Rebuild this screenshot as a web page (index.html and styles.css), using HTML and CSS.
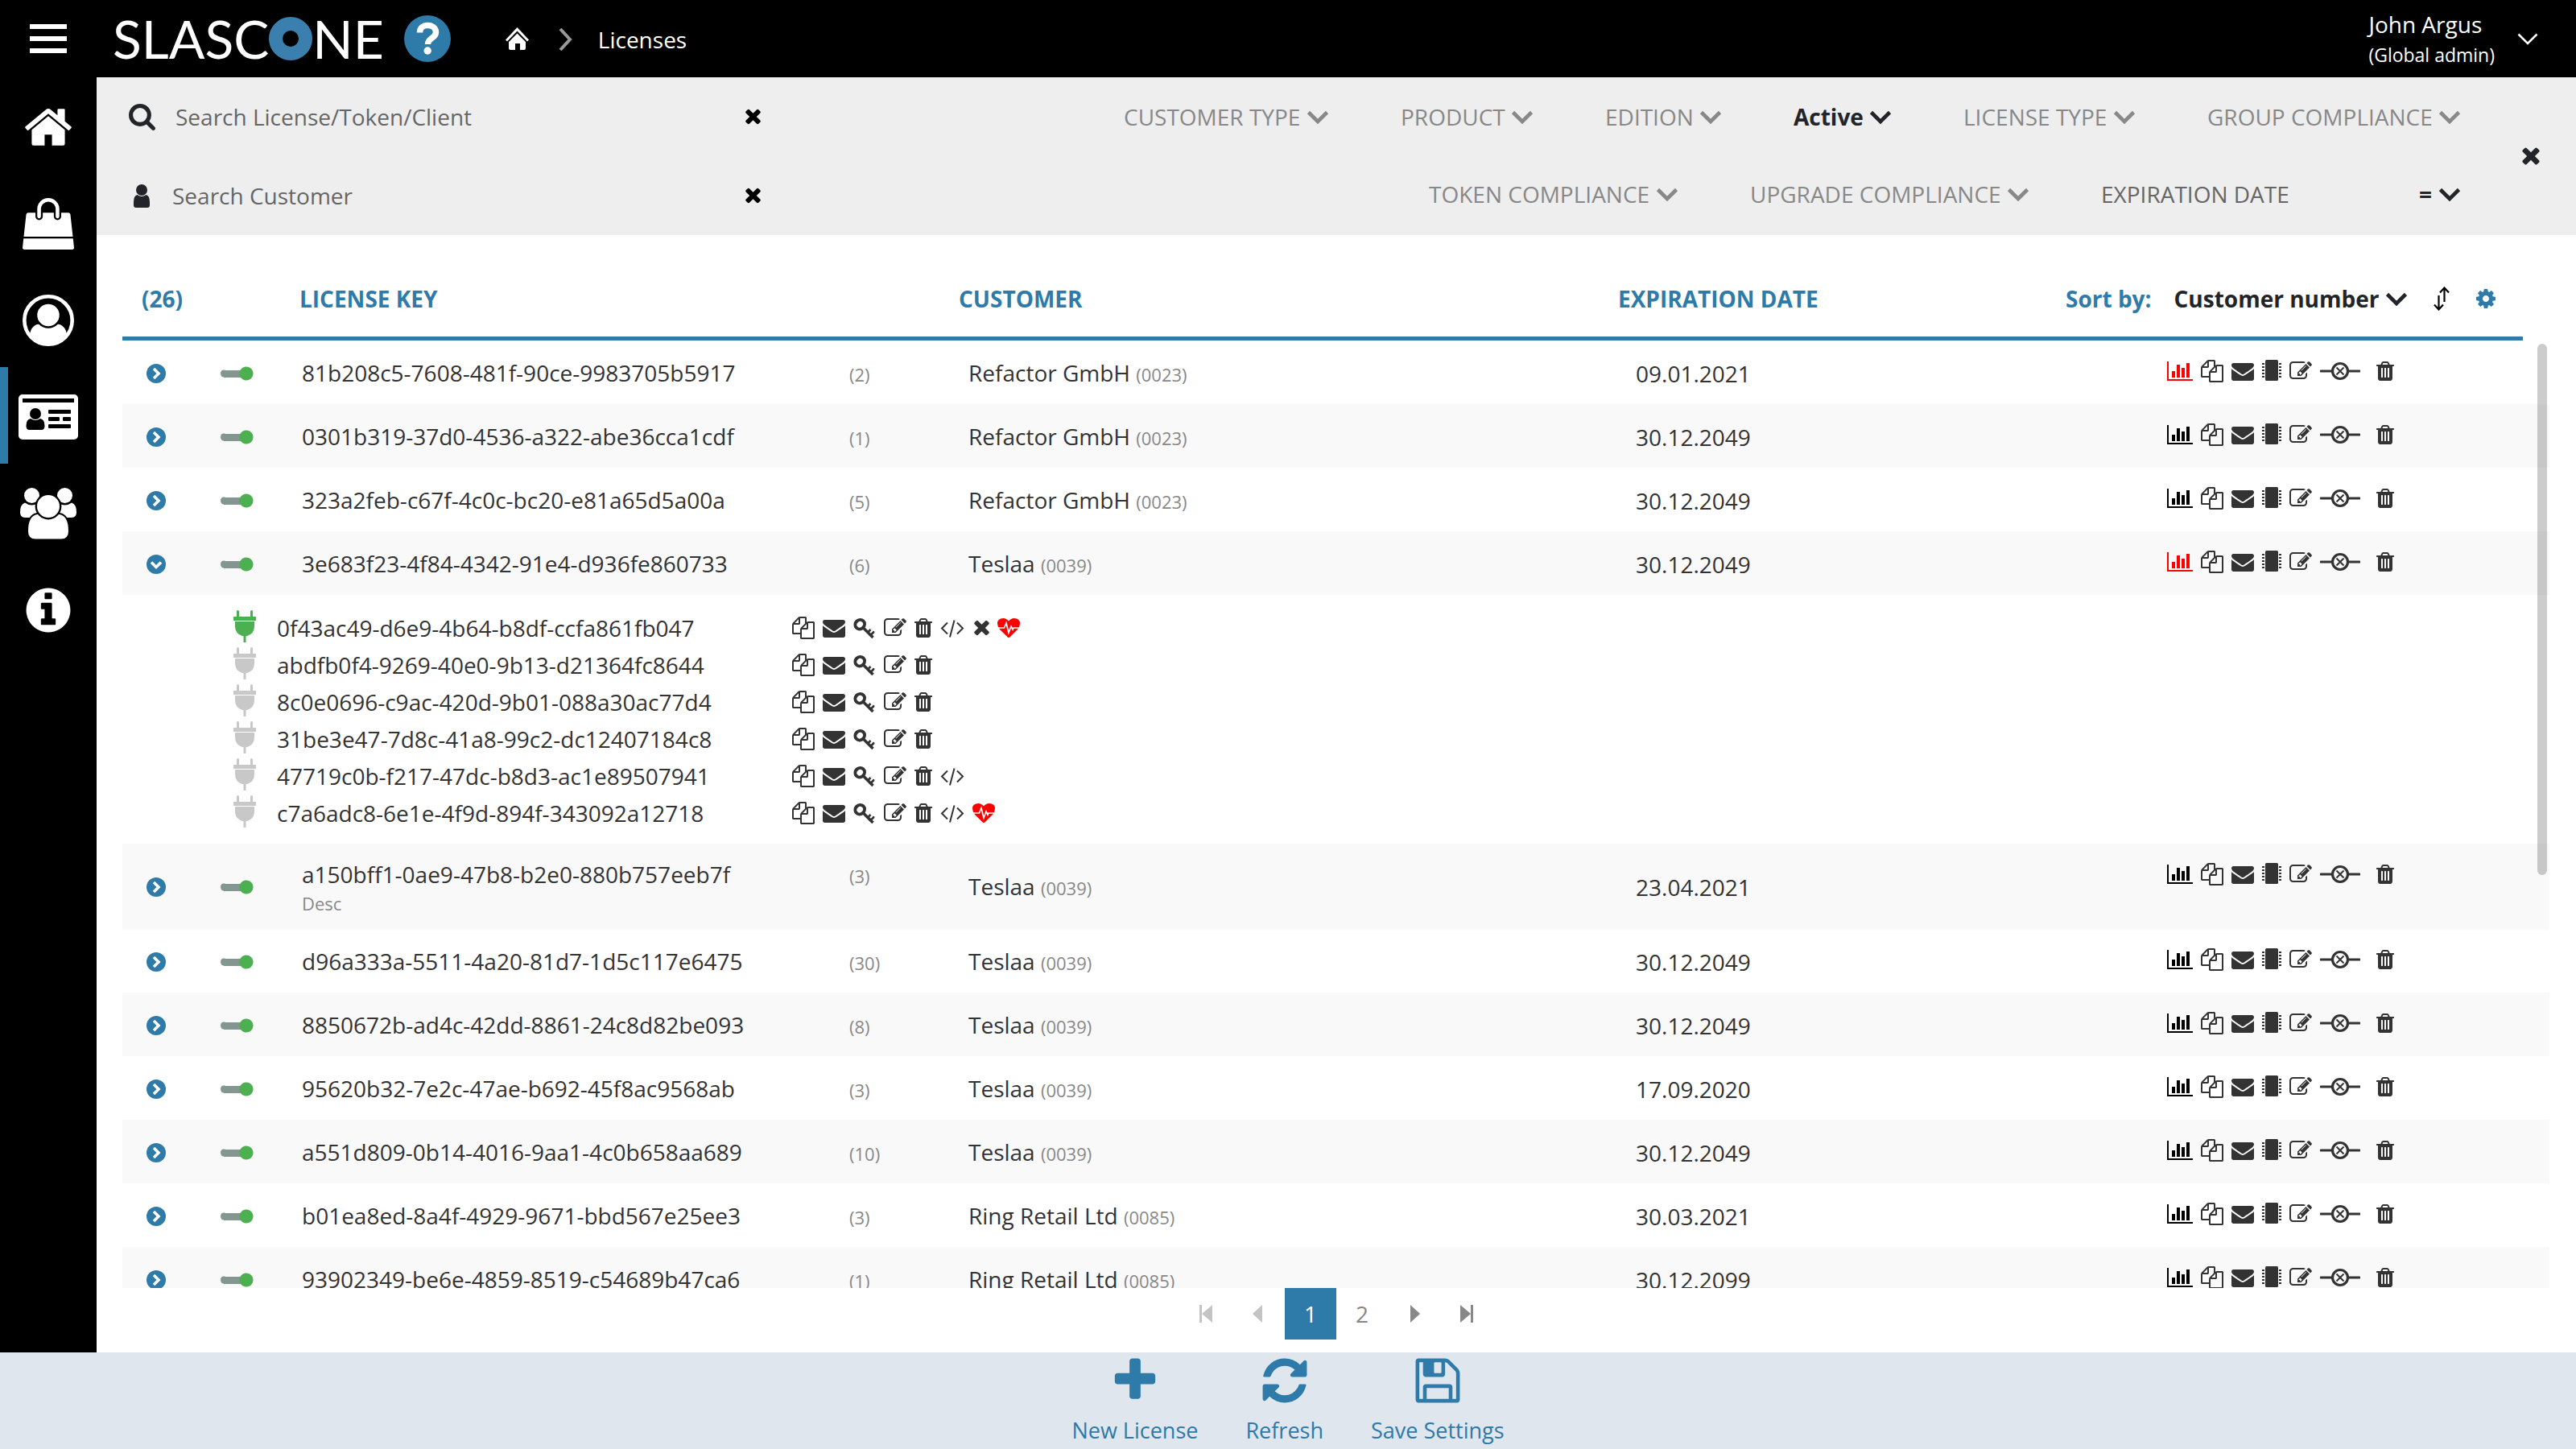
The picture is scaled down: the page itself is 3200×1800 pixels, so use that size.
FILE: index.html
```html
<!DOCTYPE html>
<html lang="en">
<head>
<meta charset="utf-8">
<title>Slascone - Licenses</title>
<link rel="stylesheet" href="styles.css">
</head>
<body>
<svg class="sprite" aria-hidden="true">
  <symbol id="home" viewBox="0 0 1792 1792"><path d="M1472 992v480q0 26-19 45t-45 19h-384v-384h-256v384h-384q-26 0-45-19t-19-45v-480q0-1 .5-3t.5-3l575-474 575 474q1 2 1 6zm223-69l-62 74q-8 9-21 11h-3q-13 0-21-7l-692-577-692 577q-12 8-24 7-13-2-21-11l-62-74q-8-10-7-23.5t11-21.5l719-599q32-26 76-26t76 26l244 204v-195q0-14 9-23t23-9h192q14 0 23 9t9 23v408l219 182q10 8 11 21.5t-7 23.5z"/></symbol>
  <symbol id="bag" viewBox="0 0 1792 1792"><path d="M1757 1408l35 313q3 28-16 50-19 21-48 21h-1664q-29 0-48-21-19-22-16-50l35-313h1722zm-93-839l86 775h-1708l86-775q3-24 21-40.5t43-16.5h256v128q0 53 37.5 90.5t90.5 37.5 90.5-37.5 37.5-90.5v-128h384v128q0 53 37.5 90.5t90.5 37.5 90.5-37.5 37.5-90.5v-128h256q25 0 43 16.5t21 40.5zm-384-185v256q0 26-19 45t-45 19-45-19-19-45v-256q0-106-75-181t-181-75-181 75-75 181v256q0 26-19 45t-45 19-45-19-19-45v-256q0-159 112.5-271.5t271.5-112.5 271.5 112.5 112.5 271.5z"/></symbol>
  <symbol id="person" viewBox="0 0 64 64"><path d="M9 50c1-9 6-13.500 13-13.500h20c7 0 12 4.500 13 13.500q-9 12-23 12T9 50z"/><circle cx="32" cy="25.500" r="15" stroke="#000" stroke-width="2.500"/><circle cx="32" cy="32" r="29.700" fill="none" stroke="currentColor" stroke-width="4.600"/></symbol>
  <symbol id="card" viewBox="0 0 74 64"><rect y="4" width="74" height="56" rx="5"/><g fill="#000"><rect x="5" y="9" width="64" height="5"/><circle cx="21" cy="28" r="7"/><path d="M15 34q6 4 12 0 5.500 1 5.500 9 0 5-4 5h-15q-4 0-4-5 0-8 5.500-9z"/><rect x="37" y="23" width="28" height="5" rx="1"/><rect x="37" y="32" width="14" height="5" rx="1"/><rect x="55" y="32" width="10" height="5" rx="1"/><rect x="37" y="41" width="28" height="5" rx="1"/></g></symbol>
  <symbol id="group" viewBox="0 0 70 64"><path d="M6 18.500q8 6 17 0h24q9 6 17 0 6 2 6 12 0 6.500-6 6.500H6q-6 0-6-6.500 0-10 6-12z"/><circle cx="14.500" cy="9.500" r="9.500"/><circle cx="55.500" cy="9.500" r="9.500"/><path d="M21 32h28q12 2 12 22 0 10.500-10 10.500H19q-10 0-10-10.500 0-20 12-22z" stroke="#000" stroke-width="2"/><circle cx="35" cy="23" r="15.200" stroke="#000" stroke-width="2.400"/></symbol>
  <symbol id="info" viewBox="0 0 1792 1792"><path d="M1152 1376v-160q0-14-9-23t-23-9h-96v-512q0-14-9-23t-23-9h-320q-14 0-23 9t-9 23v160q0 14 9 23t23 9h96v320h-96q-14 0-23 9t-9 23v160q0 14 9 23t23 9h448q14 0 23-9t9-23zm-128-896v-160q0-14-9-23t-23-9h-192q-14 0-23 9t-9 23v160q0 14 9 23t23 9h192q14 0 23-9t9-23zm640 416q0 209-103 385.500t-279.500 279.500-385.500 103-385.500-103-279.500-279.500-103-385.500 103-385.500 279.500-279.500 385.500-103 385.500 103 279.500 279.500 103 385.500z"/></symbol>
  <symbol id="menu" viewBox="0 0 46 36"><path d="M0 0h46v6H0zM0 15h46v6H0zM0 30h46v6H0z"/></symbol>
  <symbol id="help" viewBox="0 0 58 58"><circle cx="29" cy="29" r="29" fill="#2e7aa8"/><path d="M19.500 21.500c0-7 5-9 9.500-9s10.500 2 10.500 8.500c0 8-10 6.500-10 15" fill="none" stroke="#fff" stroke-width="7.500"/><circle cx="29.200" cy="44" r="4.700" fill="#fff"/></symbol>
  <symbol id="ring" viewBox="0 0 54 54"><circle cx="27" cy="27" r="18.500" fill="none" stroke="#3a7fae" stroke-width="17"/></symbol>
  <symbol id="homesmall" viewBox="0 0 29 28"><path d="M14.500 0l14.500 15.500-2 2L14.500 4.500 2 17.500l-2-2z"/><path d="M14.500 7.500L25 18v8q0 2-2 2h-5v-8h-6v8H6q-2 0-2-2v-8z"/></symbol>
  <symbol id="next-crumb" viewBox="0 0 17 28"><path d="M2 1l12 13L2 27" fill="none" stroke="currentColor" stroke-width="4"/></symbol>
  <symbol id="chev-thin" viewBox="0 0 26 15"><path d="M1.500 1.500L13 13 24.500 1.500" fill="none" stroke="currentColor" stroke-width="2.600"/></symbol>
  <symbol id="chev" viewBox="0 0 28 18"><path d="M2.500 3.500L14 15 25.500 3.500" fill="none" stroke="currentColor" stroke-width="4.600"/></symbol>
  <symbol id="search" viewBox="64 128 1664 1664"><path d="M1216 832q0-185-131.500-316.500t-316.500-131.500-316.500 131.500-131.500 316.500 131.500 316.500 316.500 131.500 316.500-131.500 131.500-316.500zm512 832q0 52-38 90t-90 38q-54 0-90-38l-343-342q-179 124-399 124-143 0-273.500-55.500t-225-150-150-225-55.500-273.500 55.500-273.500 150-225 225-150 273.500-55.500 273.500 55.500 225 150 150 225 55.500 273.500q0 220-124 399l343 343q37 37 37 90z"/></symbol>
  <symbol id="user" viewBox="0 0 29 33"><circle cx="16" cy="9" r="7"/><path d="M10.500 15q5.500 4 11 0 4.500 1 4.500 9v4q0 3-3 3H9q-3 0-3-3v-4q0-8 4.500-9z"/></symbol>
  <symbol id="times" viewBox="302 64 1188 1792"><path d="M1490 1322q0 40-28 68l-136 136q-28 28-68 28t-68-28l-294-294-294 294q-28 28-68 28t-68-28l-136-136q-28-28-28-68t28-68l294-294-294-294q-28-28-28-68t28-68l136-136q28-28 68-28t68 28l294 294 294-294q28-28 68-28t68 28l136 136q28 28 28 68t-28 68l-294 294 294 294q28 28 28 68z"/></symbol>
  <symbol id="sort" viewBox="0 0 20 30"><path d="M6.500 11v17M1 22.500l5.500 6 5.500-6M13.500 19V2M8 7.500l5.500-6 5.500 6" fill="none" stroke="currentColor" stroke-width="2.200"/></symbol>
  <symbol id="cog" viewBox="128 128 1536 1536"><path d="M1152 896q0-106-75-181t-181-75-181 75-75 181 75 181 181 75 181-75 75-181zm512-109v222q0 12-8 23t-20 13l-185 28q-19 54-39 91 35 50 107 138 10 12 10 25t-9 23q-27 37-99 108t-94 71q-12 0-26-9l-138-108q-44 23-91 38-16 136-29 186-7 28-36 28h-222q-14 0-24.500-8.500t-11.500-21.500l-28-184q-49-16-90-37l-141 107q-10 9-25 9-14 0-25-11-126-114-165-168-7-10-7-23 0-12 8-23 15-21 51-66.500t54-70.500q-27-50-41-99l-183-27q-13-2-21-12.500t-8-23.500v-222q0-12 8-23t19-13l186-28q14-46 39-92-40-57-107-138-10-12-10-24 0-10 9-23 26-36 98.500-107.500t94.500-71.500q13 0 26 10l138 107q44-23 91-38 16-136 29-186 7-28 36-28h222q14 0 24.500 8.500t11.500 21.500l28 184q49 16 90 37l142-107q9-9 24-9 13 0 25 10 129 119 165 170 7 8 7 22 0 12-8 23-15 21-51 66.500t-54 70.500q26 50 41 98l183 28q13 2 21 12.500t8 23.500z"/></symbol>
  <symbol id="open" viewBox="0 0 24 24"><circle cx="12" cy="12" r="12"/><path d="M9 6l6 6-6 6" fill="none" stroke="#fff" stroke-width="3.600"/></symbol>
  <symbol id="opened" viewBox="0 0 24 24"><circle cx="12" cy="12" r="12"/><path d="M6 9.500l6 6 6-6" fill="none" stroke="#fff" stroke-width="3.600"/></symbol>
  <symbol id="chart" viewBox="0 0 32 28"><path d="M0 2h2v22h30v2H0zM6 14h4v8H6zM12 6h4v16h-4zM18 10h4v12h-4zM24 4h4v18h-4z"/></symbol>
  <symbol id="copy" viewBox="0 0 1792 1792"><path d="M1696 384q40 0 68 28t28 68v1216q0 40-28 68t-68 28h-960q-40 0-68-28t-28-68v-288h-544q-40 0-68-28t-28-68v-672q0-40 20-88t48-76l408-408q28-28 76-48t88-20h416q40 0 68 28t28 68v328q68-40 128-40h416zm-544 213l-299 299h299v-299zm-640-384l-299 299h299v-299zm196 647l316-316v-416h-384v416q0 40-28 68t-68 28h-416v640h512v-256q0-40 20-88t48-76zm956 804v-1152h-384v416q0 40-28 68t-68 28h-416v640h896z"/></symbol>
  <symbol id="mail" viewBox="0 0 1792 1792"><path d="M1792 710v794q0 66-47 113t-113 47h-1472q-66 0-113-47t-47-113v-794q44 49 101 87 362 246 497 345 57 42 92.500 65.500t94.500 48 110 24.500h2q51 0 110-24.500t94.500-48 92.500-65.500q170-123 498-345 57-39 100-87zm0-294q0 79-49 151t-122 123q-376 261-468 325-10 7-42.500 31t-54 38.500-52 32.500-57.500 27-50 9h-2q-23 0-50-9t-57.500-27-52-32.500-54-38.500-42.500-31q-91-64-262-182.500t-205-142.500q-62-42-117-115.500t-55-136.500q0-78 41.500-130t118.500-52h1472q65 0 112.500 47t47.500 113z"/></symbol>
  <symbol id="chip" viewBox="0 0 24 28"><rect x="4" width="16" height="26" rx="1.500"/><path d="M1.500 4v20M22.500 4v20" fill="none" stroke="currentColor" stroke-width="3" stroke-dasharray="2 2"/></symbol>
  <symbol id="edit" viewBox="0 0 1792 1792"><path d="M888 1184l116-116-152-152-116 116v56h96v96h56zm440-720q-16-16-33 1l-350 350q-17 17-1 33t33-1l350-350q17-17 1-33zm80 594v190q0 119-84.500 203.500t-203.500 84.500h-832q-119 0-203.500-84.500t-84.500-203.500v-832q0-119 84.500-203.500t203.500-84.500h832q63 0 117 25 15 7 18 23 3 17-9 29l-49 49q-14 14-32 8-23-6-45-6h-832q-66 0-113 47t-47 113v832q0 66 47 113t113 47h832q66 0 113-47t47-113v-126q0-13 9-22l64-64q15-15 35-7t20 29zm-96-738l288 288-672 672h-288v-288zm444 132l-92 92-288-288 92-92q28-28 68-28t68 28l152 152q28 28 28 68t-28 68z"/></symbol>
  <symbol id="link" viewBox="0 0 50 28"><g fill="none" stroke="currentColor"><path d="M1 14h14M35 14h14" stroke-width="3" stroke-linecap="round"/><circle cx="25" cy="14" r="9.500" stroke-width="3.200"/><path d="M20.500 9.500l9 9M29.500 9.500l-9 9" stroke-width="2"/></g></symbol>
  <symbol id="trash" viewBox="192 0 1408 1792"><path d="M704 1376v-704q0-14-9-23t-23-9h-64q-14 0-23 9t-9 23v704q0 14 9 23t23 9h64q14 0 23-9t9-23zm256 0v-704q0-14-9-23t-23-9h-64q-14 0-23 9t-9 23v704q0 14 9 23t23 9h64q14 0 23-9t9-23zm256 0v-704q0-14-9-23t-23-9h-64q-14 0-23 9t-9 23v704q0 14 9 23t23 9h64q14 0 23-9t9-23zm-544-992h448l-48-117q-7-9-17-11h-317q-10 2-17 11zm928 32v64q0 14-9 23t-23 9h-96v948q0 83-47 143.500t-113 60.500h-832q-66 0-113-58.500t-47-141.500v-952h-96q-14 0-23-9t-9-23v-64q0-14 9-23t23-9h309l70-167q15-37 54-63t79-26h320q40 0 79 26t54 63l70 167h309q14 0 23 9t9 23z"/></symbol>
  <symbol id="key" viewBox="0 0 28 28"><g fill="none" stroke="currentColor"><ellipse cx="8.200" cy="9.700" rx="6" ry="5.600" stroke-width="4" transform="rotate(-45 8.200 9.700)"/><path d="M12 13.500L24.500 26" stroke-width="3.600"/><path d="M18 19.500l3.500-3.500M21.500 23l4-4M19.500 18l1 1M24 18.500l2 1.500" stroke-width="2.600"/></g></symbol>
  <symbol id="code" viewBox="0 0 30 28"><path d="M9 7.500L2 14.500l7 7M21 7.500l7 7-7 7M17.500 4.500l-5.500 21" fill="none" stroke="currentColor" stroke-width="2"/></symbol>
  <symbol id="heart" viewBox="0 0 28 28"><path d="M14 26q-.5 0-1-.3L3 16Q0 12.500 0 8.500 0 2 7.500 2 11 2 14 5.500 17 2 20.500 2 28 2 28 8.500 28 12.500 25 16l-10 9.700q-.5.3-1 .3z"/><path d="M0 14h8.500l2.500-6 3 12 3-8 2 4 1-2h8" fill="none" stroke="#fff" stroke-width="1.700"/></symbol>
  <symbol id="plug" viewBox="0 0 28 40"><rect x="4" width="3" height="9" rx="1.500"/><rect x="21" width="3" height="9" rx="1.500"/><rect y="8" width="28" height="5"/><path d="M2 14h24v6q0 9-9 12h-6q-9-3-9-12zM12.500 31h3v9h-3z"/></symbol>
  <symbol id="first" viewBox="0 0 16 22"><path d="M0 0h3v22H0zM16 0v22L3 11z"/></symbol>
  <symbol id="prev" viewBox="0 0 16 22"><path d="M14 0v22L2 11z"/></symbol>
  <symbol id="next" viewBox="0 0 16 22"><path d="M2 0v22l12-11z"/></symbol>
  <symbol id="last" viewBox="0 0 16 22"><path d="M13 0h3v22h-3zM0 0v22l13-11z"/></symbol>
  <symbol id="plus" viewBox="0 0 1792 1792"><path d="M1600 736v192q0 40-28 68t-68 28h-416v416q0 40-28 68t-68 28h-192q-40 0-68-28t-28-68v-416h-416q-40 0-68-28t-28-68v-192q0-40 28-68t68-28h416v-416q0-40 28-68t68-28h192q40 0 68 28t28 68v416h416q40 0 68 28t28 68z"/></symbol>
  <symbol id="refresh" viewBox="0 0 1792 1792"><path d="M1639 1056q0 5-1 7-64 268-268 434.500t-478 166.500q-146 0-282.500-55t-243.500-157l-129 129q-19 19-45 19t-45-19-19-45v-448q0-26 19-45t45-19h448q26 0 45 19t19 45-19 45l-137 137q71 66 161 102t187 36q134 0 250-65t186-179q11-17 53-117 8-23 30-23h192q13 0 22.500 9.500t9.500 22.500zm25-800v448q0 26-19 45t-45 19h-448q-26 0-45-19t-19-45 19-45l138-138q-148-137-349-137-134 0-250 65t-186 179q-11 17-53 117-8 23-30 23h-199q-13 0-22.500-9.500t-9.500-22.500v-7q65-268 270-434.500t480-166.500q146 0 284 55.500t245 156.500l130-129q19-19 45-19t45 19 19 45z"/></symbol>
  <symbol id="save" viewBox="0 0 1792 1792"><path d="M512 1536h768v-384h-768v384zm896 0h128v-896q0-14-10-38.500t-20-34.500l-281-281q-10-10-34-20t-39-10v416q0 40-28 68t-68 28h-576q-40 0-68-28t-28-68v-416h-128v1280h128v-416q0-40 28-68t68-28h832q40 0 68 28t28 68v416zm-384-928v-320q0-13-9.500-22.500t-22.500-9.500h-192q-13 0-22.500 9.500t-9.500 22.500v320q0 13 9.500 22.500t22.500 9.500h192q13 0 22.500-9.500t9.500-22.500zm640 32v928q0 40-28 68t-68 28h-1344q-40 0-68-28t-28-68v-1344q0-40 28-68t68-28h928q40 0 88 20t76 48l280 280q28 28 48 76t20 88z"/></symbol>
</svg>

<div class="app">
  <header class="topbar">
    <button class="menu" aria-label="Menu"><svg><use href="#menu"/></svg></button>
    <a class="logo" href="#" aria-label="Slascone">SLASC<svg><use href="#ring"/></svg>NE</a>
    <a class="help" href="#" aria-label="Help"><svg><use href="#help"/></svg></a>
    <nav class="crumbs">
      <a href="#" aria-label="Home"><svg class="crumb-home"><use href="#homesmall"/></svg></a>
      <svg class="crumb-sep"><use href="#next-crumb"/></svg>
      <span>Licenses</span>
    </nav>
    <button class="account">
      <span class="account-text"><span>John Argus</span><span class="role">(Global admin)</span></span>
      <svg><use href="#chev-thin"/></svg>
    </button>
  </header>

  <nav class="sidebar">
    <a href="#" aria-label="Home"><svg><use href="#home"/></svg></a>
    <a href="#" aria-label="Products"><svg><use href="#bag"/></svg></a>
    <a href="#" aria-label="Customers"><svg><use href="#person"/></svg></a>
    <a class="current" href="#" aria-label="Licenses"><svg class="w74"><use href="#card"/></svg></a>
    <a href="#" aria-label="Users"><svg class="w70"><use href="#group"/></svg></a>
    <a href="#" aria-label="Info"><svg><use href="#info"/></svg></a>
  </nav>

  <main class="content">
    <section class="filters">
      <div class="searches">
        <div class="search">
          <label for="q-license"><svg class="ico-search"><use href="#search"/></svg></label>
          <input id="q-license" type="text" placeholder="Search License/Token/Client" aria-label="Search license">
          <button aria-label="Clear license search"><svg class="ico w19"><use href="#times"/></svg></button>
        </div>
        <div class="search">
          <label for="q-customer"><svg class="ico-user"><use href="#user"/></svg></label>
          <input id="q-customer" type="text" placeholder="Search Customer" aria-label="Search customer">
          <button aria-label="Clear customer search"><svg class="ico w19"><use href="#times"/></svg></button>
        </div>
      </div>
      <div class="selects">
        <div class="select-row">
          <label class="pick"><select aria-label="Customer type"><option>CUSTOMER TYPE</option></select><svg><use href="#chev"/></svg></label>
          <label class="pick"><select aria-label="Product"><option>PRODUCT</option></select><svg><use href="#chev"/></svg></label>
          <label class="pick"><select aria-label="Edition"><option>EDITION</option></select><svg><use href="#chev"/></svg></label>
          <label class="pick chosen"><select aria-label="State"><option>Active</option></select><svg><use href="#chev"/></svg></label>
          <label class="pick"><select aria-label="License type"><option>LICENSE TYPE</option></select><svg><use href="#chev"/></svg></label>
          <label class="pick"><select aria-label="Group compliance"><option>GROUP COMPLIANCE</option></select><svg><use href="#chev"/></svg></label>
        </div>
        <div class="select-row">
          <label class="pick"><select aria-label="Token compliance"><option>TOKEN COMPLIANCE</option></select><svg><use href="#chev"/></svg></label>
          <label class="pick"><select aria-label="Upgrade compliance"><option>UPGRADE COMPLIANCE</option></select><svg><use href="#chev"/></svg></label>
          <div class="expiry">
            <input type="text" placeholder="EXPIRATION DATE" aria-label="Expiration date">
            <label class="pick chosen"><select aria-label="Comparison"><option>=</option></select><svg><use href="#chev"/></svg></label>
          </div>
        </div>
      </div>
      <button class="reset" aria-label="Reset filters"><svg class="reset-icon"><use href="#times"/></svg></button>
    </section>

    <section class="list">
      <div class="scroll">
        <table class="licenses">
          <colgroup><col class="c-open"><col class="c-state"><col><col><col class="c-date"><col class="c-actions"><col class="c-edge"></colgroup>
          <thead>
            <tr>
              <th class="total">(26)</th><th></th><th>LICENSE KEY</th><th>CUSTOMER</th><th>EXPIRATION DATE</th>
              <th><div class="sorting"><label for="sort-by">Sort by:</label><span class="pick chosen"><select id="sort-by"><option>Customer number</option></select><svg><use href="#chev"/></svg></span><button class="sort-dir" aria-label="Sort direction"><svg><use href="#sort"/></svg></button><button class="settings" aria-label="Table settings"><svg><use href="#cog"/></svg></button></div></th>
              <td></td>
            </tr>
          </thead>
          <tbody>
            <tr>
              <td><button class="open" aria-label="Expand"><svg><use href="#open"/></svg></button></td><td><input class="switch" type="checkbox" aria-label="Enabled" checked></td>
              <td class="key"><div><span>81b208c5-7608-481f-90ce-9983705b5917</span><small>(2)</small></div></td><td class="customer">Refactor GmbH <small>(0023)</small></td><td class="date">09.01.2021</td>
              <td class="actions" colspan="2"><div><button class="alert" aria-label="Analytics"><svg class="ico w32"><use href="#chart"/></svg></button><button aria-label="Copy"><svg class="ico"><use href="#copy"/></svg></button><button aria-label="Mail"><svg class="ico"><use href="#mail"/></svg></button><button aria-label="Device"><svg class="ico w24"><use href="#chip"/></svg></button><button aria-label="Edit"><svg class="ico"><use href="#edit"/></svg></button><button class="wide" aria-label="Unlink"><svg class="ico w50"><use href="#link"/></svg></button><button aria-label="Delete"><svg class="ico w22"><use href="#trash"/></svg></button></div></td>
            </tr>
            <tr>
              <td><button class="open" aria-label="Expand"><svg><use href="#open"/></svg></button></td><td><input class="switch" type="checkbox" aria-label="Enabled" checked></td>
              <td class="key"><div><span>0301b319-37d0-4536-a322-abe36cca1cdf</span><small>(1)</small></div></td><td class="customer">Refactor GmbH <small>(0023)</small></td><td class="date">30.12.2049</td>
              <td class="actions" colspan="2"><div><button class="plain" aria-label="Analytics"><svg class="ico w32"><use href="#chart"/></svg></button><button aria-label="Copy"><svg class="ico"><use href="#copy"/></svg></button><button aria-label="Mail"><svg class="ico"><use href="#mail"/></svg></button><button aria-label="Device"><svg class="ico w24"><use href="#chip"/></svg></button><button aria-label="Edit"><svg class="ico"><use href="#edit"/></svg></button><button class="wide" aria-label="Unlink"><svg class="ico w50"><use href="#link"/></svg></button><button aria-label="Delete"><svg class="ico w22"><use href="#trash"/></svg></button></div></td>
            </tr>
            <tr>
              <td><button class="open" aria-label="Expand"><svg><use href="#open"/></svg></button></td><td><input class="switch" type="checkbox" aria-label="Enabled" checked></td>
              <td class="key"><div><span>323a2feb-c67f-4c0c-bc20-e81a65d5a00a</span><small>(5)</small></div></td><td class="customer">Refactor GmbH <small>(0023)</small></td><td class="date">30.12.2049</td>
              <td class="actions" colspan="2"><div><button class="plain" aria-label="Analytics"><svg class="ico w32"><use href="#chart"/></svg></button><button aria-label="Copy"><svg class="ico"><use href="#copy"/></svg></button><button aria-label="Mail"><svg class="ico"><use href="#mail"/></svg></button><button aria-label="Device"><svg class="ico w24"><use href="#chip"/></svg></button><button aria-label="Edit"><svg class="ico"><use href="#edit"/></svg></button><button class="wide" aria-label="Unlink"><svg class="ico w50"><use href="#link"/></svg></button><button aria-label="Delete"><svg class="ico w22"><use href="#trash"/></svg></button></div></td>
            </tr>
            <tr>
              <td><button class="open" aria-label="Collapse"><svg><use href="#opened"/></svg></button></td><td><input class="switch" type="checkbox" aria-label="Enabled" checked></td>
              <td class="key"><div><span>3e683f23-4f84-4342-91e4-d936fe860733</span><small>(6)</small></div></td><td class="customer">Teslaa <small>(0039)</small></td><td class="date">30.12.2049</td>
              <td class="actions" colspan="2"><div><button class="alert" aria-label="Analytics"><svg class="ico w32"><use href="#chart"/></svg></button><button aria-label="Copy"><svg class="ico"><use href="#copy"/></svg></button><button aria-label="Mail"><svg class="ico"><use href="#mail"/></svg></button><button aria-label="Device"><svg class="ico w24"><use href="#chip"/></svg></button><button aria-label="Edit"><svg class="ico"><use href="#edit"/></svg></button><button class="wide" aria-label="Unlink"><svg class="ico w50"><use href="#link"/></svg></button><button aria-label="Delete"><svg class="ico w22"><use href="#trash"/></svg></button></div></td>
            </tr>
            <tr class="detail">
              <td colspan="7">
                <ul class="tokens">
                  <li><svg class="plug on"><use href="#plug"/></svg><span class="token">0f43ac49-d6e9-4b64-b8df-ccfa861fb047</span><button aria-label="Copy"><svg class="ico"><use href="#copy"/></svg></button><button aria-label="Mail"><svg class="ico"><use href="#mail"/></svg></button><button aria-label="Key"><svg class="ico"><use href="#key"/></svg></button><button aria-label="Edit"><svg class="ico"><use href="#edit"/></svg></button><button aria-label="Delete"><svg class="ico w22"><use href="#trash"/></svg></button><button aria-label="Code"><svg class="ico w30"><use href="#code"/></svg></button><button class="remove" aria-label="Remove"><svg class="ico w19"><use href="#times"/></svg></button><button class="alert" aria-label="Heartbeat"><svg class="ico"><use href="#heart"/></svg></button></li>
                  <li><svg class="plug"><use href="#plug"/></svg><span class="token">abdfb0f4-9269-40e0-9b13-d21364fc8644</span><button aria-label="Copy"><svg class="ico"><use href="#copy"/></svg></button><button aria-label="Mail"><svg class="ico"><use href="#mail"/></svg></button><button aria-label="Key"><svg class="ico"><use href="#key"/></svg></button><button aria-label="Edit"><svg class="ico"><use href="#edit"/></svg></button><button aria-label="Delete"><svg class="ico w22"><use href="#trash"/></svg></button></li>
                  <li><svg class="plug"><use href="#plug"/></svg><span class="token">8c0e0696-c9ac-420d-9b01-088a30ac77d4</span><button aria-label="Copy"><svg class="ico"><use href="#copy"/></svg></button><button aria-label="Mail"><svg class="ico"><use href="#mail"/></svg></button><button aria-label="Key"><svg class="ico"><use href="#key"/></svg></button><button aria-label="Edit"><svg class="ico"><use href="#edit"/></svg></button><button aria-label="Delete"><svg class="ico w22"><use href="#trash"/></svg></button></li>
                  <li><svg class="plug"><use href="#plug"/></svg><span class="token">31be3e47-7d8c-41a8-99c2-dc12407184c8</span><button aria-label="Copy"><svg class="ico"><use href="#copy"/></svg></button><button aria-label="Mail"><svg class="ico"><use href="#mail"/></svg></button><button aria-label="Key"><svg class="ico"><use href="#key"/></svg></button><button aria-label="Edit"><svg class="ico"><use href="#edit"/></svg></button><button aria-label="Delete"><svg class="ico w22"><use href="#trash"/></svg></button></li>
                  <li><svg class="plug"><use href="#plug"/></svg><span class="token">47719c0b-f217-47dc-b8d3-ac1e89507941</span><button aria-label="Copy"><svg class="ico"><use href="#copy"/></svg></button><button aria-label="Mail"><svg class="ico"><use href="#mail"/></svg></button><button aria-label="Key"><svg class="ico"><use href="#key"/></svg></button><button aria-label="Edit"><svg class="ico"><use href="#edit"/></svg></button><button aria-label="Delete"><svg class="ico w22"><use href="#trash"/></svg></button><button aria-label="Code"><svg class="ico w30"><use href="#code"/></svg></button></li>
                  <li><svg class="plug"><use href="#plug"/></svg><span class="token">c7a6adc8-6e1e-4f9d-894f-343092a12718</span><button aria-label="Copy"><svg class="ico"><use href="#copy"/></svg></button><button aria-label="Mail"><svg class="ico"><use href="#mail"/></svg></button><button aria-label="Key"><svg class="ico"><use href="#key"/></svg></button><button aria-label="Edit"><svg class="ico"><use href="#edit"/></svg></button><button aria-label="Delete"><svg class="ico w22"><use href="#trash"/></svg></button><button aria-label="Code"><svg class="ico w30"><use href="#code"/></svg></button><button class="alert" aria-label="Heartbeat"><svg class="ico"><use href="#heart"/></svg></button></li>
                </ul>
              </td>
            </tr>
            <tr class="described">
              <td><button class="open" aria-label="Expand"><svg><use href="#open"/></svg></button></td><td><input class="switch" type="checkbox" aria-label="Enabled" checked></td>
              <td class="key"><div><span>a150bff1-0ae9-47b8-b2e0-880b757eeb7f</span><small>(3)</small></div><p>Desc</p></td><td class="customer">Teslaa <small>(0039)</small></td><td class="date">23.04.2021</td>
              <td class="actions" colspan="2"><div><button class="plain" aria-label="Analytics"><svg class="ico w32"><use href="#chart"/></svg></button><button aria-label="Copy"><svg class="ico"><use href="#copy"/></svg></button><button aria-label="Mail"><svg class="ico"><use href="#mail"/></svg></button><button aria-label="Device"><svg class="ico w24"><use href="#chip"/></svg></button><button aria-label="Edit"><svg class="ico"><use href="#edit"/></svg></button><button class="wide" aria-label="Unlink"><svg class="ico w50"><use href="#link"/></svg></button><button aria-label="Delete"><svg class="ico w22"><use href="#trash"/></svg></button></div></td>
            </tr>
            <tr>
              <td><button class="open" aria-label="Expand"><svg><use href="#open"/></svg></button></td><td><input class="switch" type="checkbox" aria-label="Enabled" checked></td>
              <td class="key"><div><span>d96a333a-5511-4a20-81d7-1d5c117e6475</span><small>(30)</small></div></td><td class="customer">Teslaa <small>(0039)</small></td><td class="date">30.12.2049</td>
              <td class="actions" colspan="2"><div><button class="plain" aria-label="Analytics"><svg class="ico w32"><use href="#chart"/></svg></button><button aria-label="Copy"><svg class="ico"><use href="#copy"/></svg></button><button aria-label="Mail"><svg class="ico"><use href="#mail"/></svg></button><button aria-label="Device"><svg class="ico w24"><use href="#chip"/></svg></button><button aria-label="Edit"><svg class="ico"><use href="#edit"/></svg></button><button class="wide" aria-label="Unlink"><svg class="ico w50"><use href="#link"/></svg></button><button aria-label="Delete"><svg class="ico w22"><use href="#trash"/></svg></button></div></td>
            </tr>
            <tr>
              <td><button class="open" aria-label="Expand"><svg><use href="#open"/></svg></button></td><td><input class="switch" type="checkbox" aria-label="Enabled" checked></td>
              <td class="key"><div><span>8850672b-ad4c-42dd-8861-24c8d82be093</span><small>(8)</small></div></td><td class="customer">Teslaa <small>(0039)</small></td><td class="date">30.12.2049</td>
              <td class="actions" colspan="2"><div><button class="plain" aria-label="Analytics"><svg class="ico w32"><use href="#chart"/></svg></button><button aria-label="Copy"><svg class="ico"><use href="#copy"/></svg></button><button aria-label="Mail"><svg class="ico"><use href="#mail"/></svg></button><button aria-label="Device"><svg class="ico w24"><use href="#chip"/></svg></button><button aria-label="Edit"><svg class="ico"><use href="#edit"/></svg></button><button class="wide" aria-label="Unlink"><svg class="ico w50"><use href="#link"/></svg></button><button aria-label="Delete"><svg class="ico w22"><use href="#trash"/></svg></button></div></td>
            </tr>
            <tr>
              <td><button class="open" aria-label="Expand"><svg><use href="#open"/></svg></button></td><td><input class="switch" type="checkbox" aria-label="Enabled" checked></td>
              <td class="key"><div><span>95620b32-7e2c-47ae-b692-45f8ac9568ab</span><small>(3)</small></div></td><td class="customer">Teslaa <small>(0039)</small></td><td class="date">17.09.2020</td>
              <td class="actions" colspan="2"><div><button class="plain" aria-label="Analytics"><svg class="ico w32"><use href="#chart"/></svg></button><button aria-label="Copy"><svg class="ico"><use href="#copy"/></svg></button><button aria-label="Mail"><svg class="ico"><use href="#mail"/></svg></button><button aria-label="Device"><svg class="ico w24"><use href="#chip"/></svg></button><button aria-label="Edit"><svg class="ico"><use href="#edit"/></svg></button><button class="wide" aria-label="Unlink"><svg class="ico w50"><use href="#link"/></svg></button><button aria-label="Delete"><svg class="ico w22"><use href="#trash"/></svg></button></div></td>
            </tr>
            <tr>
              <td><button class="open" aria-label="Expand"><svg><use href="#open"/></svg></button></td><td><input class="switch" type="checkbox" aria-label="Enabled" checked></td>
              <td class="key"><div><span>a551d809-0b14-4016-9aa1-4c0b658aa689</span><small>(10)</small></div></td><td class="customer">Teslaa <small>(0039)</small></td><td class="date">30.12.2049</td>
              <td class="actions" colspan="2"><div><button class="plain" aria-label="Analytics"><svg class="ico w32"><use href="#chart"/></svg></button><button aria-label="Copy"><svg class="ico"><use href="#copy"/></svg></button><button aria-label="Mail"><svg class="ico"><use href="#mail"/></svg></button><button aria-label="Device"><svg class="ico w24"><use href="#chip"/></svg></button><button aria-label="Edit"><svg class="ico"><use href="#edit"/></svg></button><button class="wide" aria-label="Unlink"><svg class="ico w50"><use href="#link"/></svg></button><button aria-label="Delete"><svg class="ico w22"><use href="#trash"/></svg></button></div></td>
            </tr>
            <tr>
              <td><button class="open" aria-label="Expand"><svg><use href="#open"/></svg></button></td><td><input class="switch" type="checkbox" aria-label="Enabled" checked></td>
              <td class="key"><div><span>b01ea8ed-8a4f-4929-9671-bbd567e25ee3</span><small>(3)</small></div></td><td class="customer">Ring Retail Ltd <small>(0085)</small></td><td class="date">30.03.2021</td>
              <td class="actions" colspan="2"><div><button class="plain" aria-label="Analytics"><svg class="ico w32"><use href="#chart"/></svg></button><button aria-label="Copy"><svg class="ico"><use href="#copy"/></svg></button><button aria-label="Mail"><svg class="ico"><use href="#mail"/></svg></button><button aria-label="Device"><svg class="ico w24"><use href="#chip"/></svg></button><button aria-label="Edit"><svg class="ico"><use href="#edit"/></svg></button><button class="wide" aria-label="Unlink"><svg class="ico w50"><use href="#link"/></svg></button><button aria-label="Delete"><svg class="ico w22"><use href="#trash"/></svg></button></div></td>
            </tr>
            <tr>
              <td><button class="open" aria-label="Expand"><svg><use href="#open"/></svg></button></td><td><input class="switch" type="checkbox" aria-label="Enabled" checked></td>
              <td class="key"><div><span>93902349-be6e-4859-8519-c54689b47ca6</span><small>(1)</small></div></td><td class="customer">Ring Retail Ltd <small>(0085)</small></td><td class="date">30.12.2099</td>
              <td class="actions" colspan="2"><div><button class="plain" aria-label="Analytics"><svg class="ico w32"><use href="#chart"/></svg></button><button aria-label="Copy"><svg class="ico"><use href="#copy"/></svg></button><button aria-label="Mail"><svg class="ico"><use href="#mail"/></svg></button><button aria-label="Device"><svg class="ico w24"><use href="#chip"/></svg></button><button aria-label="Edit"><svg class="ico"><use href="#edit"/></svg></button><button class="wide" aria-label="Unlink"><svg class="ico w50"><use href="#link"/></svg></button><button aria-label="Delete"><svg class="ico w22"><use href="#trash"/></svg></button></div></td>
            </tr>
          </tbody>
        </table>
      </div>
      <div class="thumb"></div>
    </section>

    <nav class="pager" aria-label="Pages">
      <button class="off" aria-label="First page"><svg><use href="#first"/></svg></button>
      <button class="off" aria-label="Previous page"><svg><use href="#prev"/></svg></button>
      <button class="here">1</button>
      <button>2</button>
      <button class="on" aria-label="Next page"><svg><use href="#next"/></svg></button>
      <button class="on" aria-label="Last page"><svg><use href="#last"/></svg></button>
    </nav>
  </main>

  <footer class="toolbar">
    <button><svg><use href="#plus"/></svg><span>New License</span></button>
    <button><svg><use href="#refresh"/></svg><span>Refresh</span></button>
    <button><svg><use href="#save"/></svg><span>Save Settings</span></button>
  </footer>
</div>
</body>
</html>
```
FILE: styles.css
```css
:root {
  --blue: #2e7aa8;
  --ink: #333;
  --muted: #888;
}

* { box-sizing: border-box; }

body {
  margin: 0;
  font: 28px/38px "Open Sans", "Noto Sans", sans-serif;
  color: var(--ink);
  background: #fff;
}

svg { display: block; fill: currentColor; flex: none; }
.sprite { display: none; }

button, select, input {
  margin: 0;
  padding: 0;
  border: 0;
  background: none;
  font: inherit;
  color: inherit;
}
button { cursor: pointer; flex: none; }
select { appearance: none; }
a { color: inherit; text-decoration: none; }

.app {
  display: grid;
  grid-template: 96px minmax(0, 1fr) 120px / 120px minmax(0, 1fr);
  height: 100vh;
}

/* top bar */
.topbar {
  grid-column: 1 / -1;
  display: flex;
  align-items: center;
  padding: 0 47px 0 37px;
  background: #000;
  color: #fff;
}
.menu { margin-right: 57px; }
.menu svg { width: 46px; height: 36px; }
.logo {
  display: flex;
  align-items: center;
  margin-right: 25px;
  font: 66px/96px Lato, "Open Sans", sans-serif;
}
.logo svg { width: 54px; height: 54px; }
.help svg { width: 58px; height: 58px; }
.crumbs { display: flex; align-items: center; margin-left: 68px; }
.crumb-home { width: 29px; height: 28px; }
.crumb-sep { width: 17px; height: 28px; margin: 2px 32px 0 37px; color: #999; }
.crumbs span { padding-top: 2px; }
.account { display: flex; align-items: center; gap: 28px; margin-left: auto; text-align: left; }
.account-text { display: grid; padding-top: 1px; }
.role { font-size: 23px; }
.account svg { width: 26px; height: 15px; }

/* sidebar */
.sidebar { background: #000; color: #fff; }
.sidebar a {
  display: flex;
  justify-content: center;
  height: 120px;
  padding-top: 30px;
}
.sidebar .current {
  border: solid var(--blue);
  border-width: 0 0 0 10px;
  padding-right: 10px;
}
.sidebar svg { width: 64px; height: 64px; }
.sidebar .w74 { width: 74px; }
.sidebar .w70 { width: 70px; }

.content { display: flex; flex-direction: column; min-width: 0; }

/* filters */
.filters {
  display: flex;
  align-items: center;
  padding: 0 45px 0 40px;
  background: #eee;
  color: #212529;
}
.searches { flex: 0 0 785px; }
.search { display: flex; align-items: center; height: 98px; }
.search label { margin-right: 25px; }
.search input { flex: 1; min-width: 0; }
.search button { color: #000; }
input::placeholder { color: #666; opacity: 1; }
.ico-search { width: 33px; height: 33px; }
.ico-user { width: 29px; height: 33px; }
.selects { flex: 1; margin-bottom: 2px; }
.select-row { display: flex; justify-content: flex-end; align-items: center; gap: 89px; height: 96px; }
.pick { display: flex; align-items: center; gap: 7px; color: var(--muted); }
.pick svg { width: 28px; height: 18px; }
.chosen { color: #212529; font-weight: 700; }
.expiry { display: flex; justify-content: space-between; width: 447px; }
.expiry input { flex: 1; min-width: 0; }
.reset { margin-left: 76px; }
.reset-icon { width: 22px; height: 32px; }

/* license table */
.list {
  position: relative;
  flex: 1;
  min-height: 0;
  padding: 30px 33px 0 32px;
}
.scroll { height: 100%; overflow-y: auto; scrollbar-width: none; }
.thumb {
  position: absolute;
  top: 135px;
  right: 36px;
  width: 12px;
  height: 660px;
  border-radius: 6px;
  background: rgba(0, 0, 0, .2);
}
.licenses {
  width: 100%;
  table-layout: fixed;
  border-collapse: separate;
  border-spacing: 0;
}
.c-open { width: 100px; }
.c-state { width: 119px; }
.c-date { width: 512px; }
.c-actions { width: 613px; }
.c-edge { width: 33px; }

th {
  height: 101px;
  padding: 2px 0 0 1px;
  border-bottom: 5px solid var(--blue);
  color: var(--blue);
  font-weight: 700;
  text-align: left;
}
th.total { padding-left: 24px; }
td { height: 79px; padding: 2px 0 0; }
tbody tr:nth-child(even) { background: #f9f9f9; }
.described td { height: 106px; }
.detail td { padding: 0; }
small { font-size: 22px; color: var(--muted); }

.sorting { display: flex; align-items: center; padding-left: 44px; }
.sorting label { margin-right: 28px; }
.sorting .pick { margin-right: 32px; }
.sort-dir { color: #000; margin-right: 33px; }
.sort-dir svg { width: 20px; height: 30px; }
.settings svg { width: 24px; height: 24px; }

.open { display: block; margin-left: 30px; color: var(--blue); }
.open svg { width: 24px; height: 24px; }

.switch {
  appearance: none;
  display: block;
  width: 41px;
  height: 18px;
  margin-left: 22px;
  border-radius: 9px;
  background:
    radial-gradient(circle at 32px 9px, #4caf50 8px, transparent 9px),
    linear-gradient(#83968f, #83968f) 4px 5px / 28px 9px no-repeat,
    radial-gradient(circle at 4px 9px, #83968f 4px, transparent 5px);
}

.key { padding-left: 4px; }
.key div { display: flex; justify-content: space-between; }
.key small { width: 135px; padding-top: 2px; }
.key p { margin: 0; font-size: 22px; line-height: 30px; color: var(--muted); }
.customer { padding-left: 13px; }
.date { padding-left: 23px; }

.actions { padding: 0; vertical-align: top; }
.actions div { display: flex; gap: 10px; padding: 24px 0 0 171px; }
.actions .wide { margin-right: 10px; }
.plain { color: #000; }
.alert { color: #f00; }

.ico { width: 28px; height: 28px; }
.w19 { width: 19px; }
.w22 { width: 22px; }
.w24 { width: 24px; }
.w30 { width: 30px; }
.w32 { width: 32px; }
.w50 { width: 50px; }

.tokens { margin: 0; padding: 18px 0 15px 138px; list-style: none; }
.tokens li { display: flex; align-items: center; gap: 10px; height: 46px; }
.token { flex: 0 0 630px; margin-left: 16px; }
.plug { width: 28px; height: 40px; margin-bottom: 4px; color: #c8c8c8; }
.plug.on { color: #4caf50; }
.remove { padding-left: 2px; }

/* pager */
.pager { display: flex; justify-content: center; padding-bottom: 16px; color: var(--muted); }
.pager button { display: flex; justify-content: center; align-items: center; width: 64px; height: 64px; }
.pager svg { width: 16px; height: 22px; }
.pager .off { padding-right: 4px; color: #c4c4c4; }
.pager .on { padding-left: 4px; }
.pager .here { background: var(--blue); color: #fff; }

/* bottom toolbar */
.toolbar {
  grid-column: 1 / -1;
  display: flex;
  justify-content: center;
  align-items: flex-start;
  gap: 59px;
  padding-top: 3px;
  background: #dfe6ee;
  color: var(--blue);
}
.toolbar button { display: grid; justify-items: center; gap: 11px; font-size: 27px; }
.toolbar svg { width: 64px; height: 64px; }
```
